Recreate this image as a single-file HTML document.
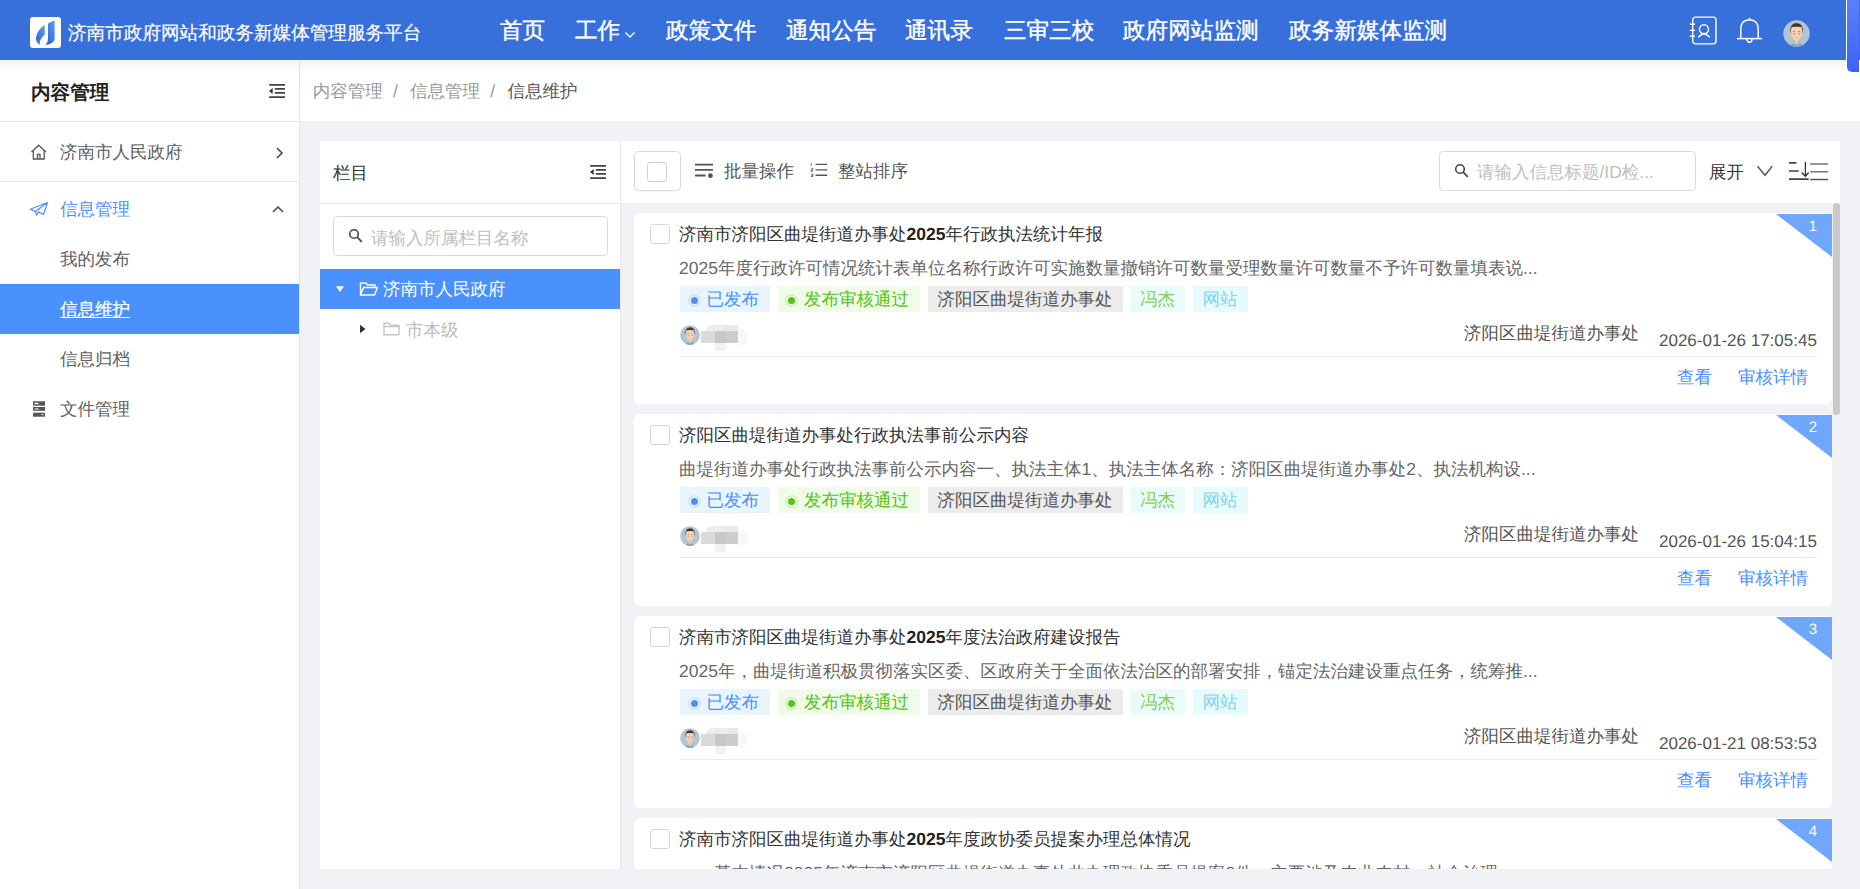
<!DOCTYPE html>
<html><head><meta charset="utf-8">
<style>
*{margin:0;padding:0;box-sizing:border-box}
html,body{text-rendering:geometricPrecision;width:1860px;height:889px;overflow:hidden;background:#f0f2f5;font-family:"Liberation Sans",sans-serif;color:#333;position:relative}
.abs{position:absolute}
.t{position:absolute;white-space:nowrap;line-height:1}
svg{display:block}
#hdr{position:absolute;left:0;top:0;width:1846px;height:60px;background:#3870db}
#logo{position:absolute;left:30px;top:17px;width:31px;height:31px;background:#fff;border-radius:3px}
.nav{position:absolute;top:20px;font-size:22.6px;color:#fff;-webkit-text-stroke:0.4px #fff;line-height:1;white-space:nowrap}
#side{position:absolute;left:0;top:60px;width:300px;height:829px;background:#fff;border-right:1px solid #e6e6e6}
#crumb{position:absolute;left:300px;top:60px;width:1560px;height:61px;background:#fff}
#shadow{position:absolute;left:0;top:60px;width:1846px;height:14px;background:linear-gradient(rgba(0,0,0,0.045),rgba(0,0,0,0))}
.hl{position:absolute;height:1px;background:#e8e8e8}
.si{position:absolute;left:60px;font-size:17.5px;color:#606060;line-height:1;white-space:nowrap}
#lp{position:absolute;left:320px;top:141px;width:300px;height:728px;background:#fff}
#rp{position:absolute;left:621px;top:141px;width:1219px;height:62px;background:#fff}
#list{position:absolute;left:621px;top:203px;width:1219px;height:666px;overflow:hidden}
.card{position:absolute;left:13px;width:1198px;height:191.67px;background:#fff;border-radius:6px}
.cb{position:absolute;left:16px;top:11px;width:20px;height:20px;border:1px solid #d6d6d6;border-radius:3px;background:#fff}
.ttl{position:absolute;left:45px;top:13px;font-size:17.5px;color:#333;line-height:1;white-space:nowrap}
.ttl b{font-weight:bold;color:#222}
.desc{position:absolute;left:45px;top:47px;font-size:17.5px;color:#666;line-height:1;white-space:nowrap}
.tags{position:absolute;left:46px;top:73px;height:26px;display:flex;gap:7.5px}
.tag{height:26px;font-size:17.5px;padding:2px 10px 0;white-space:nowrap;display:flex;align-items:center;line-height:1}
.tag.tb,.tag.tg{padding:2px 11px 0 7.5px}
.dot{width:13px;height:13px;border-radius:50%;margin-right:6px;position:relative;flex:none}
.dot:after{content:"";position:absolute;left:3px;top:3px;width:7px;height:7px;border-radius:50%}
.tb{background:#e8f5ff;color:#4b8ffd}
.tb .dot{box-shadow:inset 0 0 0 1.8px #cfe3ff;background:#f4faff}.tb .dot:after{background:#4b8ffd}
.tg{background:#f0fbe8;color:#52c41a}
.tg .dot{box-shadow:inset 0 0 0 1.8px #d3efbf;background:#f8fdf4}.tg .dot:after{background:#52c41a}
.tgr{background:#ececec;color:#555}
.tm{background:#e9fcfa;color:#86cf52}
.tc{background:#e7fbfc;color:#7fd6ee}
.av{position:absolute;left:46px;top:112px;width:20px;height:20px}
.blur{position:absolute;left:66px;top:112px;width:50px;height:26px}
.blur i{position:absolute;display:block}
.dept{position:absolute;right:193px;top:112px;font-size:17.5px;color:#555;line-height:1;white-space:nowrap}
.date{position:absolute;left:1025px;top:119px;font-size:17px;color:#555;line-height:1;white-space:nowrap}
.sep{position:absolute;left:46px;top:142.5px;width:1137px;height:1px;background:#ebebeb}
.lk{position:absolute;top:155.5px;font-size:17.5px;color:#4b8ffd;line-height:1;white-space:nowrap}
.badge{position:absolute;right:0;top:1px;width:0;height:0;border-top:43px solid #6fa8fb;border-left:56px solid transparent}
.bn{position:absolute;right:15px;top:6px;font-size:15px;color:#fff;line-height:1}
.ic{position:absolute}
</style></head><body>
<div id="hdr"></div>
<div id="logo"><svg width="31" height="31" viewBox="0 0 31 31"><defs><linearGradient id="lg" x1="0" y1="1" x2="1" y2="0"><stop offset="0" stop-color="#2d5bcf"/><stop offset="1" stop-color="#5c9ff2"/></linearGradient></defs><path d="M14.7 7.9 L14.8 17.4 Q10.6 21.3 9.7 24.6 Q9.5 26.4 10.4 27.9 Q5.6 25.6 6 21 Q6.6 13.5 14.7 7.9 Z" fill="url(#lg)"/><path d="M24.7 3.6 L24.7 21.5 Q24.5 27 15.4 27.9 Q18 25.5 18 22 L18 6.8 Q20.5 4.6 24.7 3.6 Z" fill="url(#lg)"/></svg></div>
<div class="t" style="left:68px;top:24px;font-size:18.6px;color:#fff;-webkit-text-stroke:0.2px #fff">济南市政府网站和政务新媒体管理服务平台</div>
<div class="nav" style="left:500px">首页</div>
<div class="nav" style="left:575px">工作</div>
<svg class="ic" style="left:624px;top:30.5px" width="12" height="8" viewBox="0 0 12 8"><path d="M1.5 1.5 L6 6 L10.5 1.5" stroke="#fff" stroke-width="1.3" fill="none"/></svg>
<div class="nav" style="left:666px">政策文件</div>
<div class="nav" style="left:786px">通知公告</div>
<div class="nav" style="left:905px">通讯录</div>
<div class="nav" style="left:1004px">三审三校</div>
<div class="nav" style="left:1123px">政府网站监测</div>
<div class="nav" style="left:1289px">政务新媒体监测</div>
<svg class="ic" style="left:1688px;top:15px" width="30" height="31" viewBox="0 0 30 31"><rect x="4.7" y="2.1" width="23.3" height="26.8" rx="2.8" stroke="#fff" stroke-width="1.4" fill="none"/><path d="M1.8 9.3 H7 M1.8 15.4 H7 M1.8 21.2 H7" stroke="#fff" stroke-width="1.4"/><circle cx="16" cy="14.3" r="4.5" stroke="#fff" stroke-width="1.4" fill="none"/><path d="M10.2 22.3 Q16 15.8 21.8 22.3" stroke="#fff" stroke-width="1.4" fill="none"/></svg>
<svg class="ic" style="left:1736px;top:16px" width="28" height="28" viewBox="0 0 28 28"><path d="M4.8 22.5 L4.8 13 Q4.8 4.2 13.5 3.8 Q22.2 4.2 22.2 13 L22.2 22.5" stroke="#fff" stroke-width="1.4" fill="none"/><path d="M1 22.6 H26" stroke="#fff" stroke-width="1.5"/><path d="M10.9 23 Q11 26.2 13.5 26.2 Q16 26.2 16.1 23" stroke="#fff" stroke-width="1.4" fill="none"/><circle cx="13.5" cy="3.2" r="1.1" fill="#fff"/></svg>
<div class="ic" style="left:1783px;top:20px;width:27px;height:27px"><svg viewBox="0 0 40 40" width="100%" height="100%" style="display:block"><circle cx="20" cy="20" r="19.6" fill="#afc5d3"/><path d="M11.5 37.8 Q12.5 34.5 20 34 Q27.5 34.5 28.5 37.8 A20 20 0 0 1 11.5 37.8 Z" fill="#86a8c2"/><path d="M17.6 30 H22.4 V35.5 Q20 37 17.6 35.5 Z" fill="#eec0a2"/><ellipse cx="11.8" cy="22.5" rx="1.5" ry="2.4" fill="#efc6a6"/><ellipse cx="28.2" cy="22.5" rx="1.5" ry="2.4" fill="#efc6a6"/><path d="M12.2 9 Q12 30.5 20 31.5 Q28 30.5 27.8 9 Z" fill="#f5d2b4"/><path d="M10.6 20 Q9.5 4.5 20 4.5 Q30.5 4.5 29.8 20 Q28.6 13 27.4 10.5 Q20 9.5 12.8 10.5 Q11.6 13 10.6 20 Z" fill="#4f3128"/><path d="M14.6 17.2 Q16.3 16.4 18 17.2 M22 17.2 Q23.7 16.4 25.4 17.2" stroke="#8a6a5a" stroke-width="0.9" fill="none"/><circle cx="16.3" cy="20.3" r="0.9" fill="#6a4c40"/><circle cx="23.7" cy="20.3" r="0.9" fill="#6a4c40"/><path d="M18.3 27 Q20 27.5 21.7 27" stroke="#c99880" stroke-width="0.8" fill="none"/></svg></div>

<div id="side"></div>
<div id="crumb"></div>
<div id="shadow"></div>
<div class="abs" style="left:1846px;top:0;width:1px;height:60px;background:#fff"></div>
<div class="abs" style="left:1859px;top:0;width:1px;height:60px;background:#3870db"></div>
<div class="abs" style="left:1847px;top:0;width:12px;height:72px;background:linear-gradient(#5b80f9,#3c61f7);border-radius:0 0 0 5px"></div>

<div class="t" style="left:31px;top:84px;font-size:19.6px;font-weight:bold;color:#222">内容管理</div>
<svg class="ic" style="left:268px;top:83px" width="18" height="16" viewBox="0 0 18 16"><path d="M1.2 1.8 H17 M6.8 5.9 H17 M6.8 9.9 H17 M1.2 14.1 H17" stroke="#444" stroke-width="1.7"/><path d="M1 8 L4.7 5 L4.7 11 Z" fill="#333"/></svg>
<div class="hl" style="left:0;top:121px;width:299px"></div>
<svg class="ic" style="left:30px;top:144px" width="18" height="17" viewBox="0 0 18 17"><path d="M1.5 8 L8.7 1.2 L16 8" stroke="#555" stroke-width="1.3" fill="none"/><path d="M3.3 6.5 V15 H14.2 V6.5" stroke="#555" stroke-width="1.3" fill="none"/><path d="M7.4 15 V10.5 H10 V15" stroke="#555" stroke-width="1.3" fill="none"/></svg>
<div class="si" style="top:144px">济南市人民政府</div>
<svg class="ic" style="left:274px;top:146px" width="12" height="14" viewBox="0 0 12 14"><path d="M3 2 L8 7 L3 12" stroke="#444" stroke-width="1.5" fill="none"/></svg>
<div class="hl" style="left:0;top:181px;width:299px"></div>
<svg class="ic" style="left:29px;top:201px" width="20" height="16" viewBox="0 0 20 16"><path d="M1.3 8.2 L18.5 1.5 L14.5 13.5 L9.5 10.8 L7.5 14.2 L6.5 10.6 Z M6.5 10.6 L18.5 1.5" stroke="#4b8ffd" stroke-width="1.2" fill="none" stroke-linejoin="round"/></svg>
<div class="si" style="top:201px;color:#4b8ffd">信息管理</div>
<svg class="ic" style="left:271px;top:203px" width="14" height="12" viewBox="0 0 14 12"><path d="M2 9 L7 4 L12 9" stroke="#444" stroke-width="1.5" fill="none"/></svg>
<div class="si" style="top:251px">我的发布</div>
<div class="abs" style="left:0;top:284px;width:299px;height:50px;background:#4a91fe"></div>
<div class="si" style="top:301px;color:#fff;text-decoration:underline;text-underline-offset:2px;-webkit-text-stroke:0.25px #fff">信息维护</div>
<div class="si" style="top:351px">信息归档</div>
<svg class="ic" style="left:33px;top:401px" width="12" height="16" viewBox="0 0 12 16"><rect x="0" y="0.3" width="12" height="4.4" fill="#555"/><rect x="0" y="6" width="12" height="3.8" fill="#555"/><rect x="0" y="11.7" width="12" height="4" fill="#555"/><rect x="1.5" y="1.8" width="4" height="1.4" fill="#fff"/><rect x="1.5" y="7.3" width="4" height="1.4" fill="#ccc"/><rect x="8.5" y="13" width="2" height="1.2" fill="#ddd"/></svg>
<div class="si" style="top:401px">文件管理</div>

<div class="t" style="left:312.7px;top:83px;font-size:17.5px;color:#999">内容管理<span style="display:inline-block;width:27.4px;text-align:center;position:relative;left:-1px">/</span>信息管理<span style="display:inline-block;width:27.4px;text-align:center;position:relative;left:-1px">/</span><span style="color:#555">信息维护</span></div>

<div id="lp"></div>
<div class="abs" style="left:620px;top:141px;width:1px;height:728px;background:#e8e8e8"></div>
<div class="t" style="left:333px;top:165px;font-size:17.5px;color:#333">栏目</div>
<svg class="ic" style="left:589px;top:164px" width="18" height="16" viewBox="0 0 18 16"><path d="M1.2 1.8 H17 M6.8 5.9 H17 M6.8 9.9 H17 M1.2 14.1 H17" stroke="#444" stroke-width="1.7"/><path d="M1 8 L4.7 5 L4.7 11 Z" fill="#333"/></svg>
<div class="hl" style="left:320px;top:203px;width:300px"></div>
<div class="abs" style="left:333px;top:216px;width:275px;height:40px;border:1px solid #dcdcdc;border-radius:4px;background:#fff"></div>
<svg class="ic" style="left:348px;top:228px" width="16" height="16" viewBox="0 0 16 16"><circle cx="6" cy="6" r="4.3" stroke="#444" stroke-width="1.6" fill="none"/><path d="M9.2 9.2 L13.8 13.8" stroke="#444" stroke-width="1.7"/></svg>
<div class="t" style="left:371px;top:230px;font-size:17.5px;color:#c0c0c0">请输入所属栏目名称</div>
<div class="abs" style="left:320px;top:269px;width:300px;height:40px;background:#4a91fe"></div>
<svg class="ic" style="left:335px;top:285px" width="10" height="8" viewBox="0 0 10 8"><path d="M1 1.2 L9 1.2 L5 7 Z" fill="#fff"/></svg>
<svg class="ic" style="left:359px;top:281px" width="20" height="16" viewBox="0 0 20 16"><path d="M1.5 14 V2 H7 L8.5 4 H16 V6.5 M1.5 14 L4.5 6.5 H18.5 L15.5 14 Z" stroke="#fff" stroke-width="1.4" fill="none" stroke-linejoin="round"/></svg>
<div class="t" style="left:383px;top:281px;font-size:17.5px;color:#fff">济南市人民政府</div>
<svg class="ic" style="left:359px;top:324px" width="8" height="10" viewBox="0 0 8 10"><path d="M1 0.8 L6.5 5 L1 9.2 Z" fill="#333"/></svg>
<svg class="ic" style="left:383px;top:322px" width="17" height="14" viewBox="0 0 17 14"><path d="M1 12.7 V1.3 H6 L7.5 3.3 H16 V12.7 Z M1 4.5 H16" stroke="#c4c4c4" stroke-width="1.4" fill="none" stroke-linejoin="round"/></svg>
<div class="t" style="left:406px;top:322px;font-size:17.5px;color:#bbb">市本级</div>

<div id="rp"></div>
<div class="abs" style="left:634px;top:151px;width:47px;height:40px;border:1px solid #dadada;border-radius:5px;background:#fff;box-shadow:0 1px 2px rgba(0,0,0,0.05)"></div>
<div class="abs" style="left:647px;top:162px;width:20px;height:20px;border:1px solid #d0d0d0;border-radius:3px;background:#fff"></div>
<svg class="ic" style="left:694px;top:162px" width="20" height="17" viewBox="0 0 20 17"><path d="M1 2.6 H19 M1 7.9 H19 M1 13.5 H11.6" stroke="#555" stroke-width="1.9"/><circle cx="16.4" cy="13.7" r="2.4" fill="#555"/></svg>
<div class="t" style="left:724px;top:163px;font-size:17.5px;color:#555">批量操作</div>
<svg class="ic" style="left:810px;top:162px" width="18" height="16" viewBox="0 0 18 16"><path d="M5.5 2.4 H17.2 M5.5 7.9 H17.2 M5.5 13.3 H17.2" stroke="#555" stroke-width="1.4"/><path d="M1.2 1 V4 M1 6.8 H3 V8 H1 V9.3 H3 M1 12.2 H3 V14.5 H1 M1.3 13.3 H3" stroke="#555" stroke-width="0.8" fill="none"/></svg>
<div class="t" style="left:838px;top:163px;font-size:17.5px;color:#555">整站排序</div>

<div class="abs" style="left:1439px;top:151px;width:257px;height:40px;border:1px solid #dcdcdc;border-radius:4px;background:#fff"></div>
<svg class="ic" style="left:1454px;top:163px" width="16" height="16" viewBox="0 0 16 16"><circle cx="6" cy="6" r="4.3" stroke="#444" stroke-width="1.6" fill="none"/><path d="M9.2 9.2 L13.8 13.8" stroke="#444" stroke-width="1.7"/></svg>
<div class="t" style="left:1477px;top:164px;font-size:17.5px;color:#c0c0c0">请输入信息标题/ID检...</div>
<div class="t" style="left:1709px;top:164px;font-size:17.5px;color:#333">展开</div>
<svg class="ic" style="left:1755px;top:164px" width="19" height="13" viewBox="0 0 19 13"><path d="M2.5 2.2 L10 11.3 L17.2 2.2" stroke="#555" stroke-width="1.4" fill="none"/></svg>
<svg class="ic" style="left:1788px;top:160px" width="42" height="22" viewBox="0 0 42 22"><path d="M1 2.9 H8.4 M1 11 H10.7 M1 19.1 H20.7" stroke="#444" stroke-width="1.6"/><path d="M17.4 2 V16.3 M13.6 12.5 L17.4 16.3 L20.7 12.5" stroke="#333" stroke-width="1.3" fill="none"/><path d="M22.2 4 H40 M22.2 11.7 H40" stroke="#777" stroke-width="1.6"/><path d="M22.2 19.5 H40" stroke="#555" stroke-width="1.5"/></svg>

<div id="list">
<div class="card" style="top:10px;height:191px">
 <div class="cb"></div>
 <div class="ttl">济南市济阳区曲堤街道办事处<b>2025</b>年行政执法统计年报</div>
 <div class="desc">2025年度行政许可情况统计表单位名称行政许可实施数量撤销许可数量受理数量许可数量不予许可数量填表说...</div>
 <div class="tags"><div class="tag tb"><span class="dot"></span>已发布</div><div class="tag tg"><span class="dot"></span>发布审核通过</div><div class="tag tgr">济阳区曲堤街道办事处</div><div class="tag tm">冯杰</div><div class="tag tc">网站</div></div>
 <div class="av"><svg viewBox="0 0 40 40" width="100%" height="100%" style="display:block"><circle cx="20" cy="20" r="19.6" fill="#afc5d3"/><path d="M11.5 37.8 Q12.5 34.5 20 34 Q27.5 34.5 28.5 37.8 A20 20 0 0 1 11.5 37.8 Z" fill="#86a8c2"/><path d="M17.6 30 H22.4 V35.5 Q20 37 17.6 35.5 Z" fill="#eec0a2"/><ellipse cx="11.8" cy="22.5" rx="1.5" ry="2.4" fill="#efc6a6"/><ellipse cx="28.2" cy="22.5" rx="1.5" ry="2.4" fill="#efc6a6"/><path d="M12.2 9 Q12 30.5 20 31.5 Q28 30.5 27.8 9 Z" fill="#f5d2b4"/><path d="M10.6 20 Q9.5 4.5 20 4.5 Q30.5 4.5 29.8 20 Q28.6 13 27.4 10.5 Q20 9.5 12.8 10.5 Q11.6 13 10.6 20 Z" fill="#4f3128"/><path d="M14.6 17.2 Q16.3 16.4 18 17.2 M22 17.2 Q23.7 16.4 25.4 17.2" stroke="#8a6a5a" stroke-width="0.9" fill="none"/><circle cx="16.3" cy="20.3" r="0.9" fill="#6a4c40"/><circle cx="23.7" cy="20.3" r="0.9" fill="#6a4c40"/><path d="M18.3 27 Q20 27.5 21.7 27" stroke="#c99880" stroke-width="0.8" fill="none"/></svg></div>
 <div class="blur"><i style="left:1px;top:6px;width:14px;height:12px;background:#ddd9d7"></i><i style="left:15px;top:6px;width:11px;height:12px;background:#c8c8ca"></i><i style="left:26px;top:6px;width:12px;height:12px;background:#cdcdcd"></i><i style="left:6px;top:0;width:9px;height:6px;background:#f0ecec;border-radius:6px 0 0 0"></i><i style="left:15px;top:0;width:11px;height:6px;background:#ececec"></i><i style="left:26px;top:0;width:12px;height:6px;background:#e9e9e9"></i><i style="left:38px;top:4px;width:10px;height:16px;background:#f7f8fa;border-radius:0 8px 8px 0"></i><i style="left:15px;top:18px;width:11px;height:8px;background:#f1f2f4"></i></div>
 <div class="dept">济阳区曲堤街道办事处</div>
 <div class="date">2026-01-26 17:05:45</div>
 <div class="sep"></div>
 <div class="lk" style="left:1043px">查看</div>
 <div class="lk" style="left:1104px">审核详情</div>
 <div class="badge"></div><div class="bn">1</div>
</div>
<div class="card" style="top:211px;height:192px">
 <div class="cb"></div>
 <div class="ttl">济阳区曲堤街道办事处行政执法事前公示内容</div>
 <div class="desc">曲堤街道办事处行政执法事前公示内容一、执法主体1、执法主体名称：济阳区曲堤街道办事处2、执法机构设...</div>
 <div class="tags"><div class="tag tb"><span class="dot"></span>已发布</div><div class="tag tg"><span class="dot"></span>发布审核通过</div><div class="tag tgr">济阳区曲堤街道办事处</div><div class="tag tm">冯杰</div><div class="tag tc">网站</div></div>
 <div class="av"><svg viewBox="0 0 40 40" width="100%" height="100%" style="display:block"><circle cx="20" cy="20" r="19.6" fill="#afc5d3"/><path d="M11.5 37.8 Q12.5 34.5 20 34 Q27.5 34.5 28.5 37.8 A20 20 0 0 1 11.5 37.8 Z" fill="#86a8c2"/><path d="M17.6 30 H22.4 V35.5 Q20 37 17.6 35.5 Z" fill="#eec0a2"/><ellipse cx="11.8" cy="22.5" rx="1.5" ry="2.4" fill="#efc6a6"/><ellipse cx="28.2" cy="22.5" rx="1.5" ry="2.4" fill="#efc6a6"/><path d="M12.2 9 Q12 30.5 20 31.5 Q28 30.5 27.8 9 Z" fill="#f5d2b4"/><path d="M10.6 20 Q9.5 4.5 20 4.5 Q30.5 4.5 29.8 20 Q28.6 13 27.4 10.5 Q20 9.5 12.8 10.5 Q11.6 13 10.6 20 Z" fill="#4f3128"/><path d="M14.6 17.2 Q16.3 16.4 18 17.2 M22 17.2 Q23.7 16.4 25.4 17.2" stroke="#8a6a5a" stroke-width="0.9" fill="none"/><circle cx="16.3" cy="20.3" r="0.9" fill="#6a4c40"/><circle cx="23.7" cy="20.3" r="0.9" fill="#6a4c40"/><path d="M18.3 27 Q20 27.5 21.7 27" stroke="#c99880" stroke-width="0.8" fill="none"/></svg></div>
 <div class="blur"><i style="left:1px;top:6px;width:14px;height:12px;background:#ddd9d7"></i><i style="left:15px;top:6px;width:11px;height:12px;background:#c8c8ca"></i><i style="left:26px;top:6px;width:12px;height:12px;background:#cdcdcd"></i><i style="left:6px;top:0;width:9px;height:6px;background:#f0ecec;border-radius:6px 0 0 0"></i><i style="left:15px;top:0;width:11px;height:6px;background:#ececec"></i><i style="left:26px;top:0;width:12px;height:6px;background:#e9e9e9"></i><i style="left:38px;top:4px;width:10px;height:16px;background:#f7f8fa;border-radius:0 8px 8px 0"></i><i style="left:15px;top:18px;width:11px;height:8px;background:#f1f2f4"></i></div>
 <div class="dept">济阳区曲堤街道办事处</div>
 <div class="date">2026-01-26 15:04:15</div>
 <div class="sep"></div>
 <div class="lk" style="left:1043px">查看</div>
 <div class="lk" style="left:1104px">审核详情</div>
 <div class="badge"></div><div class="bn">2</div>
</div>
<div class="card" style="top:413px;height:192px">
 <div class="cb"></div>
 <div class="ttl">济南市济阳区曲堤街道办事处<b>2025</b>年度法治政府建设报告</div>
 <div class="desc">2025年，曲堤街道积极贯彻落实区委、区政府关于全面依法治区的部署安排，锚定法治建设重点任务，统筹推...</div>
 <div class="tags"><div class="tag tb"><span class="dot"></span>已发布</div><div class="tag tg"><span class="dot"></span>发布审核通过</div><div class="tag tgr">济阳区曲堤街道办事处</div><div class="tag tm">冯杰</div><div class="tag tc">网站</div></div>
 <div class="av"><svg viewBox="0 0 40 40" width="100%" height="100%" style="display:block"><circle cx="20" cy="20" r="19.6" fill="#afc5d3"/><path d="M11.5 37.8 Q12.5 34.5 20 34 Q27.5 34.5 28.5 37.8 A20 20 0 0 1 11.5 37.8 Z" fill="#86a8c2"/><path d="M17.6 30 H22.4 V35.5 Q20 37 17.6 35.5 Z" fill="#eec0a2"/><ellipse cx="11.8" cy="22.5" rx="1.5" ry="2.4" fill="#efc6a6"/><ellipse cx="28.2" cy="22.5" rx="1.5" ry="2.4" fill="#efc6a6"/><path d="M12.2 9 Q12 30.5 20 31.5 Q28 30.5 27.8 9 Z" fill="#f5d2b4"/><path d="M10.6 20 Q9.5 4.5 20 4.5 Q30.5 4.5 29.8 20 Q28.6 13 27.4 10.5 Q20 9.5 12.8 10.5 Q11.6 13 10.6 20 Z" fill="#4f3128"/><path d="M14.6 17.2 Q16.3 16.4 18 17.2 M22 17.2 Q23.7 16.4 25.4 17.2" stroke="#8a6a5a" stroke-width="0.9" fill="none"/><circle cx="16.3" cy="20.3" r="0.9" fill="#6a4c40"/><circle cx="23.7" cy="20.3" r="0.9" fill="#6a4c40"/><path d="M18.3 27 Q20 27.5 21.7 27" stroke="#c99880" stroke-width="0.8" fill="none"/></svg></div>
 <div class="blur"><i style="left:1px;top:6px;width:14px;height:12px;background:#ddd9d7"></i><i style="left:15px;top:6px;width:11px;height:12px;background:#c8c8ca"></i><i style="left:26px;top:6px;width:12px;height:12px;background:#cdcdcd"></i><i style="left:6px;top:0;width:9px;height:6px;background:#f0ecec;border-radius:6px 0 0 0"></i><i style="left:15px;top:0;width:11px;height:6px;background:#ececec"></i><i style="left:26px;top:0;width:12px;height:6px;background:#e9e9e9"></i><i style="left:38px;top:4px;width:10px;height:16px;background:#f7f8fa;border-radius:0 8px 8px 0"></i><i style="left:15px;top:18px;width:11px;height:8px;background:#f1f2f4"></i></div>
 <div class="dept">济阳区曲堤街道办事处</div>
 <div class="date">2026-01-21 08:53:53</div>
 <div class="sep"></div>
 <div class="lk" style="left:1043px">查看</div>
 <div class="lk" style="left:1104px">审核详情</div>
 <div class="badge"></div><div class="bn">3</div>
</div>
<div class="card" style="top:615px;height:192px">
 <div class="cb"></div>
 <div class="ttl">济南市济阳区曲堤街道办事处<b>2025</b>年度政协委员提案办理总体情况</div>
 <div class="desc">一、基本情况2025年济南市济阳区曲堤街道办事处共办理政协委员提案0件，主要涉及农业农村、社会治理...</div>
 <div class="tags"><div class="tag tb"><span class="dot"></span>已发布</div><div class="tag tg"><span class="dot"></span>发布审核通过</div><div class="tag tgr">济阳区曲堤街道办事处</div><div class="tag tm">冯杰</div><div class="tag tc">网站</div></div>
 <div class="av"><svg viewBox="0 0 40 40" width="100%" height="100%" style="display:block"><circle cx="20" cy="20" r="19.6" fill="#afc5d3"/><path d="M11.5 37.8 Q12.5 34.5 20 34 Q27.5 34.5 28.5 37.8 A20 20 0 0 1 11.5 37.8 Z" fill="#86a8c2"/><path d="M17.6 30 H22.4 V35.5 Q20 37 17.6 35.5 Z" fill="#eec0a2"/><ellipse cx="11.8" cy="22.5" rx="1.5" ry="2.4" fill="#efc6a6"/><ellipse cx="28.2" cy="22.5" rx="1.5" ry="2.4" fill="#efc6a6"/><path d="M12.2 9 Q12 30.5 20 31.5 Q28 30.5 27.8 9 Z" fill="#f5d2b4"/><path d="M10.6 20 Q9.5 4.5 20 4.5 Q30.5 4.5 29.8 20 Q28.6 13 27.4 10.5 Q20 9.5 12.8 10.5 Q11.6 13 10.6 20 Z" fill="#4f3128"/><path d="M14.6 17.2 Q16.3 16.4 18 17.2 M22 17.2 Q23.7 16.4 25.4 17.2" stroke="#8a6a5a" stroke-width="0.9" fill="none"/><circle cx="16.3" cy="20.3" r="0.9" fill="#6a4c40"/><circle cx="23.7" cy="20.3" r="0.9" fill="#6a4c40"/><path d="M18.3 27 Q20 27.5 21.7 27" stroke="#c99880" stroke-width="0.8" fill="none"/></svg></div>
 <div class="blur"><i style="left:1px;top:6px;width:14px;height:12px;background:#ddd9d7"></i><i style="left:15px;top:6px;width:11px;height:12px;background:#c8c8ca"></i><i style="left:26px;top:6px;width:12px;height:12px;background:#cdcdcd"></i><i style="left:6px;top:0;width:9px;height:6px;background:#f0ecec;border-radius:6px 0 0 0"></i><i style="left:15px;top:0;width:11px;height:6px;background:#ececec"></i><i style="left:26px;top:0;width:12px;height:6px;background:#e9e9e9"></i><i style="left:38px;top:4px;width:10px;height:16px;background:#f7f8fa;border-radius:0 8px 8px 0"></i><i style="left:15px;top:18px;width:11px;height:8px;background:#f1f2f4"></i></div>
 <div class="dept">济阳区曲堤街道办事处</div>
 <div class="date">2026-01-20 10:12:30</div>
 <div class="sep"></div>
 <div class="lk" style="left:1043px">查看</div>
 <div class="lk" style="left:1104px">审核详情</div>
 <div class="badge"></div><div class="bn">4</div>
</div>

<div class="abs" style="left:1212px;top:0;width:7px;height:212px;background:#c9c9c9;border-radius:4px"></div>
</div>
</body></html>
